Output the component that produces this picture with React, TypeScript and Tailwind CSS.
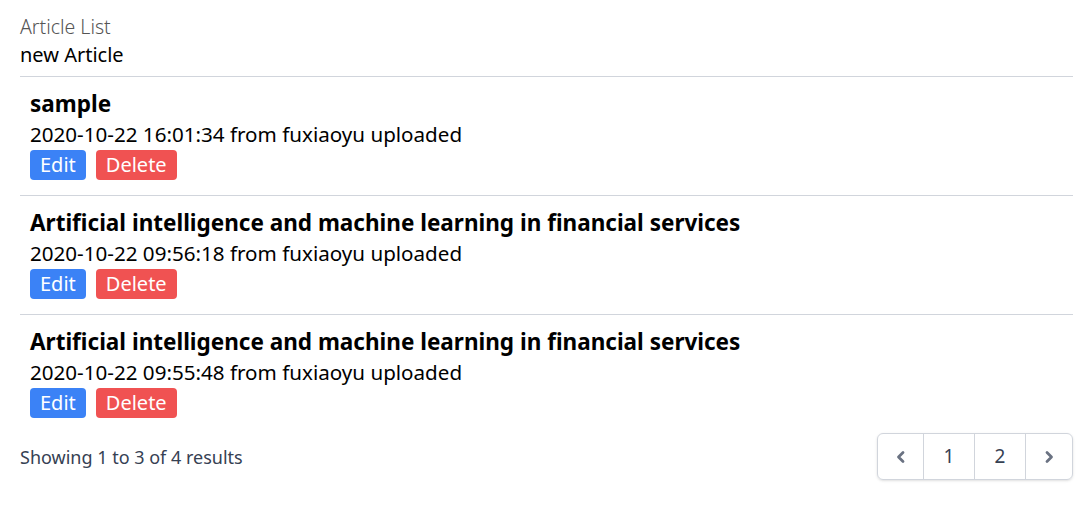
import React from "react";

type Article = { id: number; title: string; date: string; author: string };

const articles: Article[] = [
  { id: 1, title: "sample", date: "2020-10-22 16:01:34", author: "fuxiaoyu" },
  {
    id: 2,
    title: "Artificial intelligence and machine learning in financial services",
    date: "2020-10-22 09:56:18",
    author: "fuxiaoyu",
  },
  {
    id: 3,
    title: "Artificial intelligence and machine learning in financial services",
    date: "2020-10-22 09:55:48",
    author: "fuxiaoyu",
  },
];

const ChevronLeft = () => (
  <svg viewBox="0 0 20 20" fill="none" stroke="currentColor" strokeWidth={2.8} strokeLinecap="round" strokeLinejoin="round" className="w-5 h-5">
    <path d="M12 5.5 7.5 10l4.5 4.5" />
  </svg>
);

const ChevronRight = () => (
  <svg viewBox="0 0 20 20" fill="none" stroke="currentColor" strokeWidth={2.8} strokeLinecap="round" strokeLinejoin="round" className="w-5 h-5">
    <path d="M8 5.5 12.5 10 8 14.5" />
  </svg>
);

const App: React.FC = () => {
  return (
    <div className="min-h-screen bg-white pl-5 pr-[17px] pt-[13px] font-['Noto_Sans',sans-serif] text-black">
      <div className="text-[19.5px] leading-[28px] font-light text-[#555]">Article List</div>
      <div className="text-[20px] leading-[28px] pb-[7px]">new Article</div>

      <div className="border-t border-gray-300 divide-y divide-gray-300">
        {articles.map((article) => (
          <div key={article.id} className="px-[10px] pt-[12px] pb-[15px]">
            <h2 className="text-[22.5px] leading-[30px] font-bold">{article.title}</h2>
            <p className="text-[20.6px] leading-[30px]">
              {article.date} from {article.author} uploaded
            </p>
            <div className="flex gap-[10px] mt-[1px]">
              <button className="h-[30px] px-[10px] rounded bg-[#3b82f6] text-white text-[20px] leading-[30px]">
                Edit
              </button>
              <button className="h-[30px] px-[10px] rounded bg-[#f05252] text-white text-[20px] leading-[30px]">
                Delete
              </button>
            </div>
          </div>
        ))}
      </div>

      <div className="flex items-center justify-between">
        <p className="text-[18px] text-gray-700 pt-[2px]">Showing 1 to 3 of 4 results</p>
        <div className="flex h-[47px] rounded-md border border-gray-300 shadow-sm">
          <button className="w-[46px] flex items-center justify-center text-gray-500 border-r border-gray-300">
            <ChevronLeft />
          </button>
          <button className="w-[51px] flex items-center justify-center text-gray-700 text-[19px] border-r border-gray-300">
            1
          </button>
          <button className="w-[51px] flex items-center justify-center text-gray-700 text-[19px] border-r border-gray-300">
            2
          </button>
          <button className="w-[46px] flex items-center justify-center text-gray-500">
            <ChevronRight />
          </button>
        </div>
      </div>
    </div>
  );
};

export default App;
